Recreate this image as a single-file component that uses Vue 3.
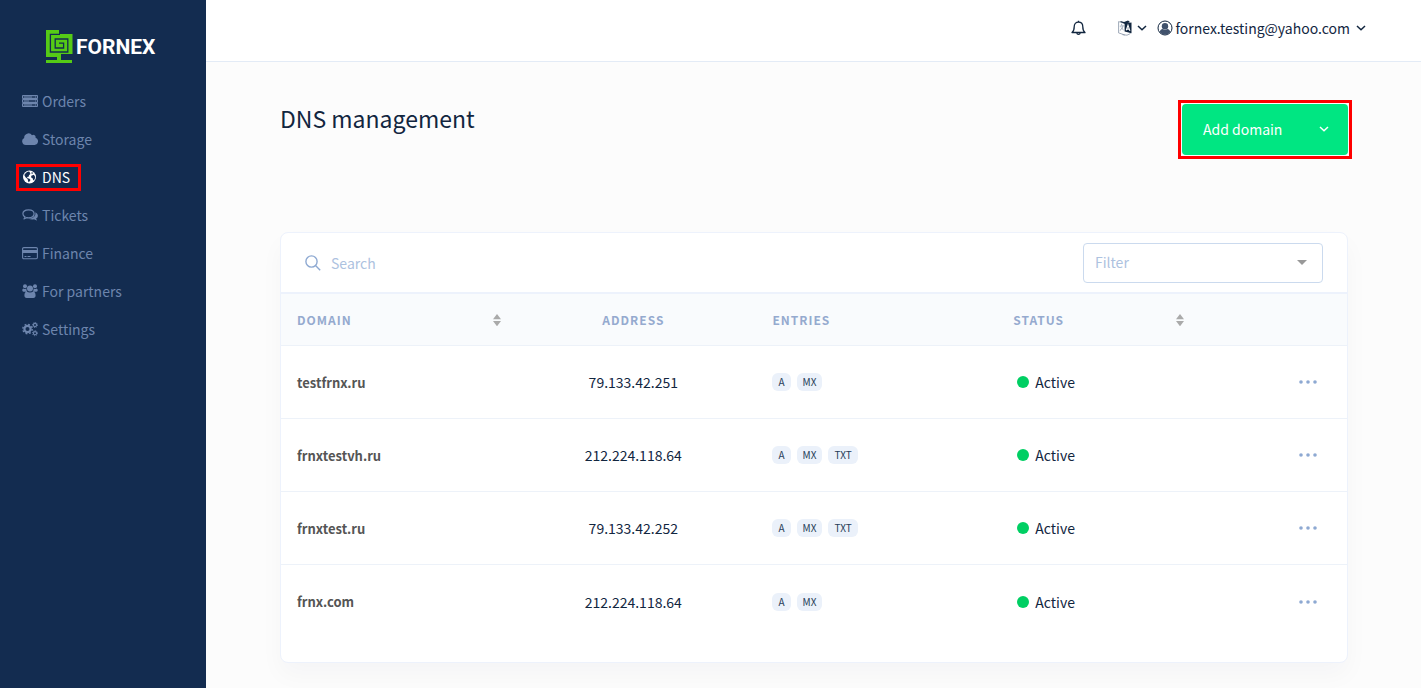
<script setup>
import { ref, computed } from 'vue'

const navItems = [
  { id: 'orders', label: 'Orders' },
  { id: 'storage', label: 'Storage' },
  { id: 'dns', label: 'DNS' },
  { id: 'tickets', label: 'Tickets' },
  { id: 'finance', label: 'Finance' },
  { id: 'partners', label: 'For partners' },
  { id: 'settings', label: 'Settings' },
]
const active = ref('dns')
const search = ref('')
const filter = ref('')

const domains = [
  { name: 'testfrnx.ru', address: '79.133.42.251', entries: ['A', 'MX'], status: 'Active' },
  { name: 'frnxtestvh.ru', address: '212.224.118.64', entries: ['A', 'MX', 'TXT'], status: 'Active' },
  { name: 'frnxtest.ru', address: '79.133.42.252', entries: ['A', 'MX', 'TXT'], status: 'Active' },
  { name: 'frnx.com', address: '212.224.118.64', entries: ['A', 'MX'], status: 'Active' },
]
const rows = computed(() => domains.filter((d) => d.name.includes(search.value.trim())))
</script>

<template>
  <div class="app">
    <aside class="sidebar">
      <a class="brand" href="#">
        <svg class="brand-mark" viewBox="0 0 27 34" aria-hidden="true">
          <path fill="#55cb16" d="M0 0H13V4H26.500V24H15V30H26V33H0V30H11V27H0Z" />
          <path fill="none" stroke="#132c50" stroke-width="1.300" d="M14 4.300H4.400V22H21.800V9H9.200V18H17.600V13.200H13" />
        </svg>
        <span>FORNEX</span>
      </a>
      <nav class="nav">
        <a
          v-for="item in navItems"
          :key="item.id"
          href="#"
          class="nav-link"
          :class="{ active: active === item.id }"
          @click.prevent="active = item.id"
        >
          <svg class="nav-icon" viewBox="0 0 16 16" aria-hidden="true">
            <template v-if="item.id === 'orders'">
              <g fill="none" stroke="currentColor">
                <path fill="currentColor" fill-opacity=".3" d="M.5 2.500h15v3H.5zM.5 6.500h15v3H.5zM.5 10.500h15v3H.5z" />
                <path d="M2 4h8M2 8h5M2 12h8M13 4h1M13 8h1M13 12h1" />
              </g>
            </template>
            <path
              v-else-if="item.id === 'storage'"
              fill="currentColor"
              d="M3.700 14A3.700 3.700 0 0 1 2.200 7 4.300 4.300 0 0 1 10 4.200 2.300 2.300 0 0 1 13.500 6.800 3.700 3.700 0 0 1 12.700 14Z"
            />
            <template v-else-if="item.id === 'dns'">
              <circle cx="7.500" cy="8" r="6.500" fill="currentColor" />
              <path
                fill="#132c50"
                d="M3.200 4.800 5 3l1.700-.6 1.300.5-.4 1.200 1 .6L7 6.200l-.4 1.500-1.800.4 1 1.200 1.700.4 1 1.200-1.600 2.300-.7-.8L5.600 10 3.500 8.300 2.300 6ZM9.300 6.700l2.600-.9 1.300 2.100-.5 2.300-1.400 1.300-.7-2.300-1.500-.6ZM9.600 3.300l1.600.5-.7.9-1.200-.3Z"
              />
            </template>
            <template v-else-if="item.id === 'tickets'">
              <path
                fill="none"
                stroke="currentColor"
                stroke-width="1.200"
                stroke-linejoin="round"
                d="M6.500 2.800c3.300 0 5.600 1.700 5.600 4s-2.300 4-5.600 4c-.6 0-1.200 0-1.700-.2-.8.600-1.700 1-2.800 1.200.5-.5.800-1 1-1.900C1.600 9.200.9 8.100.9 6.800c0-2.300 2.300-4 5.600-4Z"
              />
              <path
                fill="currentColor"
                d="M13.300 5.200c1.600.8 2.600 2 2.600 3.500 0 1.200-.7 2.200-1.800 2.900.2.800.6 1.300 1.200 1.900-1.300-.1-2.400-.6-3.300-1.300-2 .4-4.200.1-5.700-.7 4 .2 7.100-1.700 7.100-4.700 0-.6-.1-1.100-.1-1.600Z"
              />
            </template>
            <template v-else-if="item.id === 'finance'">
              <rect x=".6" y="2.600" width="14.800" height="11.200" rx="1.200" fill="none" stroke="currentColor" stroke-width="1.100" />
              <path fill="currentColor" d="M.5 5h15v3H.5zM2.500 11h2v1h-2zM5.500 11h3v1h-3z" />
            </template>
            <g v-else-if="item.id === 'partners'" fill="currentColor">
              <circle cx="3" cy="3.200" r="2" />
              <circle cx="13" cy="3.200" r="2" />
              <circle cx="8" cy="5.400" r="3" />
              <path d="M1.500 5.400c.9.600 1.900.7 3 .2-.2 1.400.1 2.300.8 3.100H1.600C.7 8.700.2 8 .3 7c.1-.8.500-1.500 1.200-1.600ZM14.500 5.400c-.9.600-1.900.7-3 .2.200 1.400-.1 2.300-.8 3.100h3.700c.9 0 1.400-.7 1.300-1.700-.1-.8-.5-1.500-1.200-1.600ZM4.600 8.500c2.200 1.300 4.600 1.300 6.800 0 1.400.2 2.200 1.800 2.200 4 0 1.500-.8 2.500-2.200 2.500H4.600c-1.400 0-2.200-1-2.200-2.500 0-2.200.8-3.800 2.200-4Z" />
            </g>
            <g v-else fill="none" stroke="currentColor">
              <circle cx="5.500" cy="8" r="3.100" stroke-width="2.200" />
              <circle cx="5.500" cy="8" r="4.700" stroke-width="1.400" stroke-dasharray="1.850 1.850" />
              <circle cx="13" cy="4" r="1.600" stroke-width="1.100" />
              <circle cx="13" cy="4" r="2.500" stroke-width="1" stroke-dasharray="1 .96" />
              <circle cx="13" cy="12.200" r="1.600" stroke-width="1.100" />
              <circle cx="13" cy="12.200" r="2.500" stroke-width="1" stroke-dasharray="1 .96" />
            </g>
          </svg>
          <span>{{ item.label }}</span>
        </a>
      </nav>
    </aside>

    <div class="page">
      <header class="topbar">
        <button type="button" class="plain" aria-label="Notifications">
          <svg width="15" height="16" viewBox="0 0 15 16" fill="none" stroke="currentColor" stroke-width="1.300" stroke-linejoin="round">
            <path d="M7.500 2.200c2.700 0 4.300 1.900 4.300 4.500 0 3 .7 4.700 2.200 5.800H1c1.500-1.100 2.200-2.800 2.200-5.800 0-2.600 1.600-4.500 4.300-4.500Z" />
            <path d="M7.500 2V.8M5.900 13c.1 1.800 3.100 1.800 3.200 0" />
          </svg>
        </button>
        <button type="button" class="plain language" aria-label="Language">
          <svg width="14" height="16" viewBox="0 0 14 16">
            <path fill="none" stroke="#8793a6" stroke-width=".8" d="M7 3.500.6 1.600v11.300L6.800 15M3.600 3.800v1.500M1.800 6.200l4-.5M5 6c-.4 2-1.500 3.500-3.200 4.500M2.800 7.500 5.600 10M4.500 14.700l4.500.5 3.500-1.700" />
            <path fill="currentColor" d="M2.500.9 6 2l4-1.400 1.500.8v1L6.600 3.800 2.500 2ZM6.600 3.600 13.500 2.500v10.800l-6.900-1.700Z" />
            <path fill="none" stroke="#fff" stroke-width="1.100" d="M8.300 10.200 10 5.200l1.900 5.700M8.800 8.900l2.400.3" />
          </svg>
          <svg class="chevron" width="10" height="6" viewBox="0 0 10 6"><path d="M1 1l4 3.800L9 1" /></svg>
        </button>
        <button type="button" class="plain account">
          <svg width="16" height="16" viewBox="0 0 16 16">
            <circle cx="8" cy="8" r="7" fill="none" stroke="currentColor" stroke-width="1" />
            <circle cx="8" cy="6.200" r="3.200" fill="#40526c" />
            <path fill="#40526c" d="M2.700 12.200c.2-1.800 1.400-3 3-3.200 1.400 1 3.200 1 4.600 0 1.600.2 2.800 1.400 3 3.200A7 7 0 0 1 2.700 12.200Z" />
          </svg>
          <span>fornex.testing@yahoo.com</span>
          <svg class="chevron" width="10" height="6" viewBox="0 0 10 6"><path d="M1 1l4 3.800L9 1" /></svg>
        </button>
      </header>

      <main class="content">
        <div class="title-row">
          <h1>DNS management</h1>
          <div class="add-frame">
            <button type="button" class="add">
              <span>Add domain</span>
              <svg class="chevron" width="10" height="6" viewBox="0 0 10 6"><path d="M1 1l4 3.800L9 1" /></svg>
            </button>
          </div>
        </div>

        <section class="card">
          <div class="tools">
            <label class="search">
              <svg width="16" height="16" viewBox="0 0 16 16" fill="none" stroke="#8ea9d2" stroke-width="1.400" aria-hidden="true">
                <circle cx="6.500" cy="6.500" r="5.600" />
                <path d="M10.500 10.500 15.200 15.200" />
              </svg>
              <input v-model="search" type="text" placeholder="Search" aria-label="Search" />
            </label>
            <div class="filter">
              <select v-model="filter" aria-label="Filter">
                <option value="">Filter</option>
                <option value="active">Active</option>
              </select>
              <svg width="10" height="5" viewBox="0 0 10 5" aria-hidden="true"><path fill="#999" d="M0 0h10L5 5z" /></svg>
            </div>
          </div>
          <table>
            <colgroup>
              <col class="c-domain" /><col class="c-address" /><col class="c-entries" /><col class="c-status" /><col />
            </colgroup>
            <thead>
              <tr>
                <th scope="col">
                  <div class="sortable">
                    Domain
                    <svg width="8" height="12" viewBox="0 0 8 12" aria-hidden="true"><path fill="#aaa" d="M0 5.300 4 0l4 5.300zM0 7h8l-4 5.300z" /></svg>
                  </div>
                </th>
                <th scope="col" class="center">Address</th>
                <th scope="col">Entries</th>
                <th scope="col">
                  <div class="sortable">
                    Status
                    <svg width="8" height="12" viewBox="0 0 8 12" aria-hidden="true"><path fill="#aaa" d="M0 5.300 4 0l4 5.300zM0 7h8l-4 5.300z" /></svg>
                  </div>
                </th>
                <th></th>
              </tr>
            </thead>
            <tbody>
              <tr v-for="row in rows" :key="row.name">
                <td><a href="#" class="domain">{{ row.name }}</a></td>
                <td class="center">{{ row.address }}</td>
                <td>
                  <div class="tags"><span v-for="e in row.entries" :key="e" class="tag">{{ e }}</span></div>
                </td>
                <td><div class="status"><i class="dot"></i>{{ row.status }}</div></td>
                <td class="actions">
                  <button type="button" class="plain" :aria-label="'Actions for ' + row.name">
                    <svg width="18" height="4" viewBox="0 0 18 4" fill="#8ea9d2"><circle cx="2" cy="2" r="1.800" /><circle cx="9" cy="2" r="1.800" /><circle cx="16" cy="2" r="1.800" /></svg>
                  </button>
                </td>
              </tr>
            </tbody>
          </table>
        </section>
      </main>
    </div>
  </div>
</template>

<style>
body {
  background: #fcfcfc;
}
</style>

<style scoped>
.app {
  display: flex;
  min-height: 100vh;
  color: #12263f;
  font-family: "Noto Sans CJK SC", "Noto Sans", sans-serif;
  font-size: 14px;
  line-height: 20px;
}
.app * {
  box-sizing: border-box;
}
a {
  color: inherit;
  text-decoration: none;
}
button,
input,
select {
  font: inherit;
  color: inherit;
}
svg {
  display: block;
  flex: none;
}
.plain {
  display: flex;
  align-items: center;
  padding: 0;
  border: 0;
  background: none;
}
.chevron {
  fill: none;
  stroke: currentColor;
  stroke-width: 1.5;
}
.sidebar {
  flex: 0 0 206px;
  background: #132c50;
  color: #6d85ad;
}
.brand {
  display: flex;
  align-items: center;
  gap: 3px;
  height: 34px;
  margin: 30px 0 27px 46px;
  color: #fff;
  font: 700 21px/32px Roboto, sans-serif;
}
.brand-mark {
  width: 27px;
  height: 34px;
}
.nav {
  display: flex;
  flex-direction: column;
  align-items: flex-start;
  gap: 17px;
  padding-left: 19px;
}
.nav-link {
  display: flex;
  align-items: center;
  gap: 4px;
  height: 21px;
  padding: 0 8px 2px 3px;
}
.nav-icon {
  width: 16px;
  height: 16px;
}
.nav-link.active {
  color: #fff;
  outline: 3px solid #f00;
}
.page {
  flex: 1;
  min-width: 0;
}
.topbar {
  display: flex;
  align-items: center;
  justify-content: flex-end;
  height: 62px;
  padding: 0 55px 5px 0;
  border-bottom: 1px solid #e3ebf6;
  background: #fff;
}
.language {
  gap: 5px;
  margin: 0 10px 0 32px;
}
.account {
  gap: 2px;
}
.account .chevron {
  margin-left: 4px;
}
.content {
  padding: 42px 73px 26px 74px;
}
.title-row {
  display: flex;
  align-items: flex-start;
  justify-content: space-between;
  margin-bottom: 77px;
}
h1 {
  margin: 0;
  font-size: 23px;
  font-weight: 400;
  line-height: 28px;
}
.add-frame {
  outline: 3px solid #f00;
  outline-offset: 1px;
}
.add {
  display: flex;
  align-items: center;
  justify-content: space-between;
  width: 166px;
  height: 51px;
  padding: 0 19px 2px 21px;
  border: 0;
  border-radius: 4px;
  background: #00e682;
  color: #fff;
}
.card {
  padding-bottom: 24px;
  border: 1px solid #edf2fc;
  border-radius: 8px;
  background: #fff;
  box-shadow: 0 12px 24px rgba(18, 38, 63, 0.03);
}
.tools {
  display: flex;
  align-items: center;
  justify-content: space-between;
  height: 61px;
  padding: 0 24px;
  border-bottom: 2px solid #edf2fc;
}
.search {
  display: flex;
  flex: 1;
  align-items: center;
  gap: 10px;
}
.search input {
  flex: 1;
  min-width: 0;
  padding: 0;
  border: 0;
  outline: 0;
  background: none;
}
.search input::placeholder {
  color: #adc2e0;
  opacity: 1;
}
.filter {
  display: grid;
  flex: 0 0 240px;
  align-items: center;
}
.filter > * {
  grid-area: 1 / 1;
}
.filter svg {
  justify-self: end;
  margin-right: 16px;
  pointer-events: none;
}
.filter select {
  width: 100%;
  height: 40px;
  padding: 0 11px 2px;
  border: 1px solid #cbdaee;
  border-radius: 4px;
  background: #fff;
  color: #adc2e0;
  appearance: none;
}
table {
  width: 100%;
  table-layout: fixed;
  border-collapse: separate;
  border-spacing: 0;
}
.c-domain {
  width: 21.5%;
}
.c-address {
  width: 23.1%;
}
.c-entries {
  width: 22.6%;
}
.c-status {
  width: 18.4%;
}
th {
  height: 52px;
  padding: 0 9px 0 16px;
  border-bottom: 1px solid #edf2f9;
  background: #f9fbfd;
  color: #95aacf;
  font-size: 12px;
  font-weight: 700;
  letter-spacing: 1px;
  text-align: left;
  text-transform: uppercase;
}
td {
  height: 73px;
  padding: 0 16px;
  border-bottom: 1px solid #edf2f9;
}
tbody tr:last-child td {
  border-bottom: 0;
}
.center {
  padding: 0;
  text-align: center;
}
.sortable {
  display: flex;
  align-items: center;
  justify-content: space-between;
}
.domain {
  color: #555;
  font-size: 13px;
  font-weight: 700;
}
.tags {
  display: flex;
  gap: 6px;
}
.tag {
  padding: 0 6px;
  border-radius: 6px;
  background: #ebf1fa;
  color: #283e59;
  font-size: 10px;
  line-height: 18px;
}
.status {
  display: flex;
  align-items: center;
  gap: 6px;
  padding-left: 4px;
}
.dot {
  width: 12px;
  height: 12px;
  border-radius: 50%;
  background: #00cf63;
}
.actions {
  padding-right: 30px;
}
.actions .plain {
  margin-left: auto;
}
</style>
